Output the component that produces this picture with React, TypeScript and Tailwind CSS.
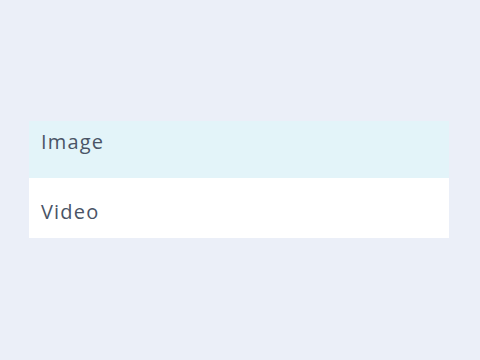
export default function App() {
  return (
    <main className="min-h-screen w-full bg-[#ebeff8] pt-[121px] px-[29px]" style={{ fontFamily: '"Open Sans", "Noto Sans", sans-serif' }}>
      <ul className="w-[420px] bg-white">
        <li className="h-[57px] px-3 pt-[7px] bg-[#e3f4f9] text-[20px] leading-[28px] tracking-[0.06em] text-[#4a5466]">Image</li>
        <li className="h-[60px] px-3 pt-[20px] text-[20px] leading-[28px] tracking-[0.06em] text-[#4a5466]">Video</li>
      </ul>
    </main>
  );
}
